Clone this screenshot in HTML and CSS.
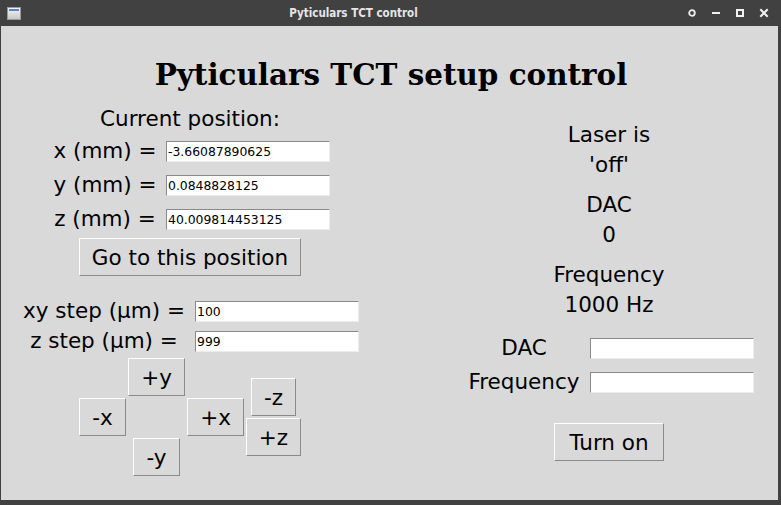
FILE: index.html
```html
<!DOCTYPE html>
<html>
<head>
<meta charset="utf-8">
<link rel="stylesheet" href="styles.css">
</head>
<body>
<div class="window">
  <div class="titlebar">
    <div class="app-icon"><span class="app-icon-bar"></span></div>
    <div class="title">Pyticulars TCT control</div>
    <div class="wm-buttons">
      <svg class="wm" width="12" height="12" viewBox="0 0 12 12"><circle cx="6" cy="6" r="2.8" fill="none" stroke="#f0f0f0" stroke-width="1.8"/></svg>
      <svg class="wm" width="12" height="12" viewBox="0 0 12 12"><rect x="2" y="5" width="8" height="2" fill="#f0f0f0"/></svg>
      <svg class="wm" width="12" height="12" viewBox="0 0 12 12"><rect x="3" y="3" width="6" height="6" fill="none" stroke="#f0f0f0" stroke-width="2"/></svg>
      <svg class="wm" width="12" height="12" viewBox="0 0 12 12"><path d="M2.3 2.3 L9.7 9.7 M9.7 2.3 L2.3 9.7" stroke="#f0f0f0" stroke-width="2"/></svg>
    </div>
  </div>
  <div class="client">
    <h1 class="heading">Pyticulars TCT setup control</h1>
    <div class="columns">
      <div class="left">
        <div class="pos-title">Current position:</div>
        <div class="form pos-form">
          <div class="lbl">x (mm) =</div><div class="entry">-3.66087890625</div>
          <div class="lbl">y (mm) =</div><div class="entry">0.0848828125</div>
          <div class="lbl">z (mm) =</div><div class="entry">40.009814453125</div>
        </div>
        <div class="btn go-btn">Go to this position</div>
        <div class="form step-form">
          <div class="lbl">xy step (µm) =</div><div class="entry">100</div>
          <div class="lbl">z step (µm) =</div><div class="entry">999</div>
        </div>
        <div class="pad">
          <div class="btn b-py">+y</div>
          <div class="btn b-mx">-x</div>
          <div class="btn b-px">+x</div>
          <div class="btn b-mz">-z</div>
          <div class="btn b-pz">+z</div>
          <div class="btn b-my">-y</div>
        </div>
      </div>
      <div class="right">
        <div class="status-list">
          <div class="status">
            <div class="line">Laser is</div>
            <div class="line">'off'</div>
          </div>
          <div class="status">
            <div class="line">DAC</div>
            <div class="line">0</div>
          </div>
          <div class="status">
            <div class="line">Frequency</div>
            <div class="line">1000 Hz</div>
          </div>
        </div>
        <div class="form laser-form">
          <div class="lbl">DAC</div><div class="entry"></div>
          <div class="lbl">Frequency</div><div class="entry"></div>
        </div>
        <div class="btn turn-btn">Turn on</div>
      </div>
    </div>
  </div>
</div>
</body>
</html>
```

FILE: styles.css
```css
html, body {
  margin: 0;
  padding: 0;
  background: #414141;
}
.window {
  width: 781px;
  height: 505px;
  display: flex;
  flex-direction: column;
  background: #414141;
}
.titlebar {
  height: 26px;
  display: flex;
  align-items: center;
  flex: none;
}
.app-icon {
  width: 14px;
  height: 13px;
  margin-left: 7px;
  background: linear-gradient(#f4f4f4, #c8c8c8);
  border: 1px solid #9a9a9a;
  box-sizing: border-box;
  display: flex;
  flex-direction: column;
}
.app-icon-bar {
  height: 2px;
  margin: 1px 1px 0;
  background: #5a86c8;
}
.title {
  flex: 1;
  text-align: center;
  font-family: "DejaVu Sans Condensed", "DejaVu Sans", sans-serif;
  font-weight: bold;
  font-size: 11.5px;
  color: #e6e6e6;
}
.wm-buttons {
  display: flex;
  gap: 12px;
  margin-right: 11px;
}
.wm { display: block; }
.client {
  flex: none;
  height: 474px;
  margin: 0 3px 0 1px;
  background: #d9d9d9;
  box-sizing: border-box;
  padding-top: 31px;
  font-family: "DejaVu Sans", sans-serif;
  font-size: 21.5px;
  color: #000;
}
.heading {
  margin: 0;
  font-family: "DejaVu Serif", serif;
  font-weight: bold;
  font-size: 29.4px;
  line-height: 36px;
  text-align: center;
  padding-left: 3px;
}
.columns {
  display: flex;
  gap: 61px;
}
.left {
  width: 378px;
  display: flex;
  flex-direction: column;
  align-items: center;
}
.right {
  width: 338px;
  display: flex;
  flex-direction: column;
  align-items: center;
  padding-top: 27px;
}
.pos-title {
  margin-top: 11px;
  line-height: 30px;
}
.form {
  display: grid;
  column-gap: 8px;
  align-items: center;
}
.lbl {
  text-align: center;
  line-height: 24px;
  white-space: nowrap;
}
.entry {
  width: 164px;
  height: 21px;
  box-sizing: border-box;
  background: #fff;
  border: 1px solid;
  border-color: #8a8a8a #ececec #ececec #8a8a8a;
  font-size: 12.4px;
  line-height: 19px;
  padding-left: 1px;
  white-space: nowrap;
  overflow: hidden;
}
.pos-form {
  grid-template-columns: 106px 164px;
  grid-auto-rows: 34px;
  padding-left: 2px;
}
.step-form {
  margin-top: 20px;
  grid-template-columns: 166px 164px;
  grid-auto-rows: 30px;
}
.laser-form {
  margin-top: 11px;
  grid-template-columns: 120px 164px;
  column-gap: 6px;
  grid-auto-rows: 34px;
}
.btn {
  height: 38px;
  box-sizing: border-box;
  border: 1px solid;
  border-color: #ffffff #8a8a8a #8a8a8a #ffffff;
  background: #d9d9d9;
  display: flex;
  align-items: center;
  justify-content: center;
  white-space: nowrap;
}
.go-btn {
  width: 222px;
  margin-top: 2px;
}
.turn-btn {
  width: 110px;
  margin-top: 24px;
}
.pad {
  margin-top: 1px;
  display: grid;
  grid-template-columns: 49px 59px 59px 57px;
  grid-template-rows: repeat(6, 20px);
  justify-items: center;
  align-items: center;
}
.b-py { grid-column: 2; grid-row: 1 / span 2; width: 57px; }
.b-mx { grid-column: 1; grid-row: 3 / span 2; width: 47px; }
.b-px { grid-column: 3; grid-row: 3 / span 2; width: 57px; }
.b-mz { grid-column: 4; grid-row: 2 / span 2; width: 45px; }
.b-pz { grid-column: 4; grid-row: 4 / span 2; width: 55px; }
.b-my { grid-column: 2; grid-row: 5 / span 2; width: 47px; }
.status-list {
  display: flex;
  flex-direction: column;
  align-items: center;
  gap: 10px;
}
.status {
  display: flex;
  flex-direction: column;
  align-items: center;
}
.line {
  line-height: 30px;
}
```
